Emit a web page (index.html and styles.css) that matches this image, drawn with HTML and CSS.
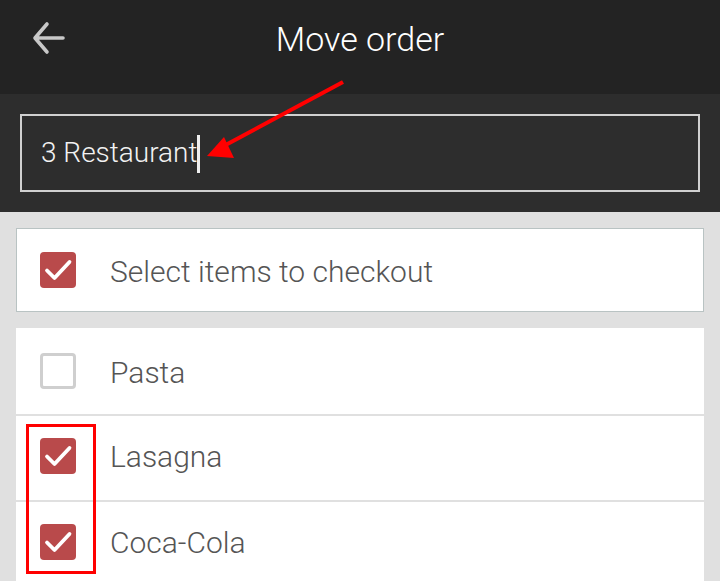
FILE: index.html
```html
<!DOCTYPE html>
<html>
<head>
<meta charset="utf-8">
<link rel="stylesheet" href="styles.css">
</head>
<body>
<div class="app">
  <header class="topbar">
    <svg class="back" width="34" height="34" viewBox="0 0 34 34"><path d="M32 17H4M16 3 4 17l12 14" fill="none" stroke="#c8c8c8" stroke-width="3.6" stroke-linecap="round" stroke-linejoin="round"/></svg>
    <h1 class="title">Move order</h1>
  </header>
  <section class="search">
    <div class="input"><span class="value">3 Restaurant</span><span class="caret"></span></div>
    <svg class="annot-arrow" width="160" height="90" viewBox="0 0 160 90"><line x1="153" y1="2" x2="30" y2="68" stroke="#ff0000" stroke-width="4"/><polygon points="17,76 44,78 34,57" fill="#ff0000"/></svg>
  </section>
  <main class="content">
    <div class="card header-card">
      <span class="cb checked"><svg viewBox="0 0 36 36" width="36" height="36"><path d="M7 18.5l7.5 7.5L29.5 10" fill="none" stroke="#fff" stroke-width="3.8" stroke-linecap="round" stroke-linejoin="round"/></svg></span>
      <span class="label">Select items to checkout</span>
    </div>
    <div class="list">
      <div class="row r1"><span class="cb"></span><span class="label">Pasta</span></div>
      <div class="row r2"><span class="cb checked"><svg viewBox="0 0 36 36" width="36" height="36"><path d="M7 18.5l7.5 7.5L29.5 10" fill="none" stroke="#fff" stroke-width="3.8" stroke-linecap="round" stroke-linejoin="round"/></svg></span><span class="label">Lasagna</span></div>
      <div class="row r3"><span class="cb checked"><svg viewBox="0 0 36 36" width="36" height="36"><path d="M7 18.5l7.5 7.5L29.5 10" fill="none" stroke="#fff" stroke-width="3.8" stroke-linecap="round" stroke-linejoin="round"/></svg></span><span class="label">Coca-Cola</span></div>
    </div>
    <div class="highlight"></div>
  </main>
</div>
</body>
</html>
```
FILE: styles.css
```css
* { box-sizing: border-box; }
html, body { margin: 0; padding: 0; }
body { width: 720px; height: 581px; overflow: hidden; background: #e0e0e0; font-family: Roboto, "Noto Sans", sans-serif; }
.app { position: relative; width: 720px; height: 581px; }
.topbar { height: 94px; background: #232323; position: relative; display: flex; align-items: center; justify-content: center; }
.back { position: absolute; left: 31px; top: 21px; }
.title { margin: 0; font-weight: 300; font-size: 34px; color: #ffffff; position: relative; top: -8px; }
.search { height: 118px; background: #2d2d2d; padding: 20px 20px 0 20px; position: relative; }
.input { height: 78px; border: 2px solid #d0d0d0; display: flex; align-items: center; padding-left: 19px; padding-bottom: 1px; }
.value { color: #f2f2f2; font-size: 28px; font-weight: 300; }
.caret { display: inline-block; width: 3px; height: 38px; background: #eeeeee; margin-left: -1px; position: relative; top: 1px; }
.annot-arrow { position: absolute; left: 190px; top: -14px; }
.content { padding: 16px 16px 0 16px; position: relative; }
.card { background: #fff; border: 1px solid #b9c3c3; height: 84px; display: flex; align-items: center; padding-left: 23px; width: 688px; }
.cb { width: 36px; height: 36px; border-radius: 4px; border: 3px solid #cfcfcf; flex: none; display: block; }
.cb.checked { background: #b94a4b; border: none; }
.cb svg { display: block; }
.label { margin-left: 34px; font-size: 30px; color: #555555; font-weight: 300; position: relative; top: 1px; }
.list { margin-top: 16px; width: 688px; display: flex; flex-direction: column; gap: 2px; }
.row { background: #fff; height: 84px; display: flex; align-items: center; padding-left: 24px; padding-bottom: 5px; }
.row.r1 { height: 86px; padding-bottom: 0; }
.highlight { position: absolute; left: 26px; top: 212px; width: 70px; height: 150px; border: 3px solid #ff0000; }
```
